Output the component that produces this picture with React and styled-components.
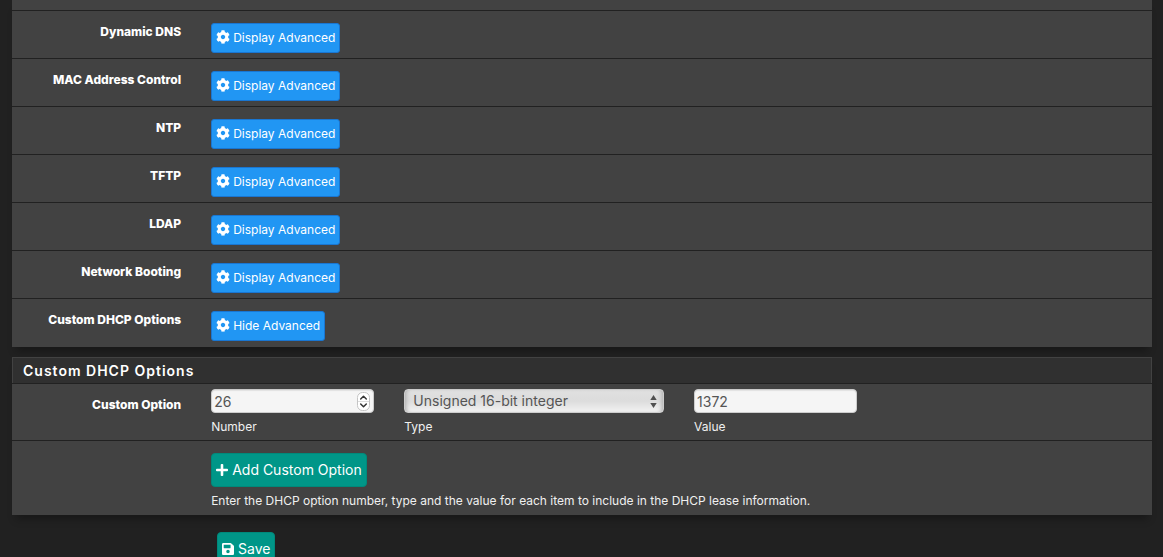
import React from "react";
import styled, { createGlobalStyle } from "styled-components";
import { FaCog, FaPlus, FaSave } from "react-icons/fa";

const GlobalStyle = createGlobalStyle`
  * { box-sizing: border-box; }
  html { height: 100%; overflow: hidden; }
  body {
    margin: 0;
    height: 100%;
    overflow: hidden;
    background: #212121;
    color: #f0f0f0;
    font-family: Inter, "Liberation Sans", sans-serif;
    font-size: 12px;
    line-height: 18px;
  }
  button, input, select { font-family: inherit; }
`;

const Page = styled.form`
  padding: 0 11px 0 12px;
`;

const Panel = styled.section`
  margin-bottom: 10px;
  background: #424242;
  box-shadow: 0 8px 8px -4px rgba(0, 0, 0, 0.3);
`;

const PanelHeading = styled.h2`
  margin: 0;
  padding: 4px 10px 3px;
  border: 1px solid #424242;
  border-bottom: 0;
  background: #303030;
  color: #fff;
  font-size: 14px;
  font-weight: 600;
  line-height: 18px;
  letter-spacing: 1px;
`;

const FormGroup = styled.div`
  padding: ${(p) => (p.$dense ? "5px 0 4px" : "12px 0 5px")};
  border-top: 1px solid #212121;
`;

const OptionList = styled.div`
  padding: 10px 0 1px;
`;

const Columns = styled.div`
  display: grid;
  grid-template-columns: repeat(12, 1fr);
  margin: 0 -10px 0 -9px;
`;

const Cell = styled.div`
  grid-column: ${(p) => (p.$start ? `${p.$start} / ` : "")}span ${(p) => p.$span};
  min-width: 0;
  padding: 0 15px;
`;

const RowLabel = styled.span`
  grid-column: span 2;
  padding: ${(p) => (p.$dense ? "7px" : "0")} 15px 0 0;
  color: #fff;
  font-weight: 800;
  line-height: 18px;
  text-align: right;
  white-space: nowrap;
`;

const Button = styled.button`
  display: inline-flex;
  align-items: center;
  gap: 4px;
  height: 34px;
  padding: 0 4px 1px;
  border: 1px solid #00897b;
  border-radius: 4px;
  background: #009688;
  color: #fff;
  font-size: 14px;
  font-weight: 400;
  white-space: nowrap;
  cursor: pointer;

  svg { width: 12px; height: 14px; }
`;

const InfoButton = styled(Button)`
  gap: 3px;
  height: 30px;
  border-color: #1976d2;
  border-radius: 3px;
  background: #2196f3;
  font-size: 12px;

  svg { width: 14px; margin-bottom: 1px; }
`;

const Actions = styled.div`
  padding: 7px 205px;
`;

const fieldLook = `
  display: block;
  width: 100%;
  height: 24px;
  border: 1px solid #ccc;
  border-radius: 4px;
  color: #555;
  font-size: 14px;
  line-height: 20px;
`;

const TextInput = styled.input`
  ${fieldLook}
  padding: 0 2px;
  background: #f5f5f5;
  box-shadow: inset 0 1px 1px rgba(0, 0, 0, 0.08);
  appearance: textfield;

  &::-webkit-inner-spin-button { display: none; }
`;

const Select = styled.select`
  ${fieldLook}
  padding: 0 20px 0 8px;
  appearance: none;
  background: linear-gradient(#e0e0e0, #dcdcdc 50%, #f2f2f2);
  box-shadow: inset 4px 0 4px -3px #aaa, inset -4px 0 4px -3px #aaa;
`;

const Control = styled.div`
  position: relative;
`;

const SelectArrows = styled.svg`
  position: absolute;
  top: 6px;
  right: 7px;
  pointer-events: none;
`;

const Stepper = styled.svg`
  position: absolute;
  top: 3px;
  right: 4px;
  pointer-events: none;
`;

const Caption = styled.label`
  display: block;
  padding-top: 5px;
`;

const Help = styled.p`
  margin: 5px 0 0;
`;

const options = [
  { name: "Dynamic DNS", action: "Display Advanced" },
  { name: "MAC Address Control", action: "Display Advanced" },
  { name: "NTP", action: "Display Advanced" },
  { name: "TFTP", action: "Display Advanced" },
  { name: "LDAP", action: "Display Advanced" },
  { name: "Network Booting", action: "Display Advanced" },
  { name: "Custom DHCP Options", action: "Hide Advanced" },
];

export default function App() {
  return (
    <>
      <GlobalStyle />
      <Page onSubmit={(e) => e.preventDefault()}>
        <Panel>
          <OptionList>
            {options.map((o) => (
              <FormGroup key={o.name}>
                <Columns>
                  <RowLabel>{o.name}</RowLabel>
                  <Cell $span={10}>
                    <InfoButton type="button">
                      <FaCog />
                      {o.action}
                    </InfoButton>
                  </Cell>
                </Columns>
              </FormGroup>
            ))}
          </OptionList>
        </Panel>
        <Panel>
          <PanelHeading>Custom DHCP Options</PanelHeading>
          <FormGroup $dense>
            <Columns>
              <RowLabel $dense>Custom Option</RowLabel>
              <Cell $span={2}>
                <Control>
                  <TextInput id="number" type="number" defaultValue="26" />
                  <Stepper width="13" height="19" viewBox="0 0 13 19" fill="none">
                    <rect x="0.5" y="0.5" width="12" height="18" rx="5" fill="#fff" stroke="#c4c4c4" />
                    <path d="M1 9.5h11" stroke="#ddd" />
                    <path d="M3.7 7 6.5 4.3 9.3 7M3.7 12 6.5 14.7 9.3 12" stroke="#333" strokeWidth="1.5" strokeLinecap="round" strokeLinejoin="round" />
                  </Stepper>
                </Control>
                <Caption htmlFor="number">Number</Caption>
              </Cell>
              <Cell $span={3}>
                <Control>
                  <Select id="type" defaultValue="u16">
                    <option value="u16">Unsigned 16-bit integer</option>
                  </Select>
                  <SelectArrows width="7" height="13" viewBox="0 0 7 13" fill="#505050">
                    <path d="M3.5 0 6.7 5H.3ZM3.5 13 .3 8h6.4Z" />
                  </SelectArrows>
                </Control>
                <Caption htmlFor="type">Type</Caption>
              </Cell>
              <Cell $span={2}>
                <TextInput id="value" type="text" defaultValue="1372" />
                <Caption htmlFor="value">Value</Caption>
              </Cell>
            </Columns>
          </FormGroup>
          <FormGroup>
            <Columns>
              <Cell $start={3} $span={10}>
                <Button type="button">
                  <FaPlus />
                  Add Custom Option
                </Button>
                <Help>
                  Enter the DHCP option number, type and the value for each item to include in the DHCP lease information.
                </Help>
              </Cell>
            </Columns>
          </FormGroup>
        </Panel>
        <Actions>
          <Button type="submit">
            <FaSave />
            Save
          </Button>
        </Actions>
      </Page>
    </>
  );
}
